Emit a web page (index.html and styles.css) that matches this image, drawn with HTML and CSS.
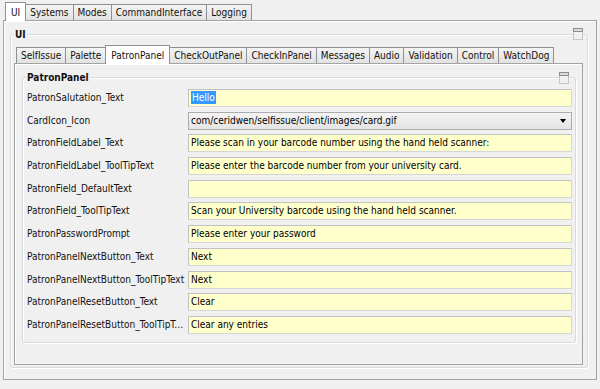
FILE: index.html
```html
<!DOCTYPE html>
<html lang="en">
<head>
    <meta charset="UTF-8">
    <title>SelfIssue Configuration</title>
    <link rel="stylesheet" href="styles.css">
</head>
<body>

    <div class="window">
        <!-- Haupt-Tabs -->
        <div class="tabs top-tabs">
            <div class="tab active">UI</div>
            <div class="tab">Systems</div>
            <div class="tab">Modes</div>
            <div class="tab">CommandInterface</div>
            <div class="tab">Logging</div>
        </div>

        <div class="tab-panel outer-panel">
            <div class="group ui-group">
                <div class="group-title">UI</div>
                <span class="dock-icon">
                    <svg width="10" height="12" viewBox="0 0 10 12">
                        <rect x="0.5" y="0.5" width="9" height="3" fill="#dcdcdc" stroke="#8c8c8c"/>
                        <path d="M0.5 3.5V11.5H9.5V3.5" fill="none" stroke="#9a9a9a" stroke-dasharray="1 1"/>
                    </svg>
                </span>

                <!-- Unter-Tabs -->
                <div class="tabs sub-tabs">
                    <div class="tab">SelfIssue</div>
                    <div class="tab">Palette</div>
                    <div class="tab active">PatronPanel</div>
                    <div class="tab">CheckOutPanel</div>
                    <div class="tab">CheckInPanel</div>
                    <div class="tab">Messages</div>
                    <div class="tab">Audio</div>
                    <div class="tab">Validation</div>
                    <div class="tab">Control</div>
                    <div class="tab">WatchDog</div>
                </div>

                <div class="tab-panel sub-panel">
                    <div class="group patron-group">
                        <div class="group-title">PatronPanel</div>
                        <span class="dock-icon">
                            <svg width="10" height="12" viewBox="0 0 10 12">
                                <rect x="0.5" y="0.5" width="9" height="3" fill="#dcdcdc" stroke="#8c8c8c"/>
                                <path d="M0.5 3.5V11.5H9.5V3.5" fill="none" stroke="#9a9a9a" stroke-dasharray="1 1"/>
                            </svg>
                        </span>

                        <div class="form-grid">
                            <div class="label">PatronSalutation_Text</div>
                            <div class="field"><span class="selected">Hello</span></div>

                            <div class="label">CardIcon_Icon</div>
                            <div class="field combo">
                                <span>com/ceridwen/selfissue/client/images/card.gif</span>
                                <span class="arrow"></span>
                            </div>

                            <div class="label">PatronFieldLabel_Text</div>
                            <div class="field">Please scan in your barcode number using the hand held scanner:</div>

                            <div class="label">PatronFieldLabel_ToolTipText</div>
                            <div class="field">Please enter the barcode number from your university card.</div>

                            <div class="label">PatronField_DefaultText</div>
                            <div class="field"></div>

                            <div class="label">PatronField_ToolTipText</div>
                            <div class="field">Scan your University barcode using the hand held scanner.</div>

                            <div class="label">PatronPasswordPrompt</div>
                            <div class="field">Please enter your password</div>

                            <div class="label">PatronPanelNextButton_Text</div>
                            <div class="field">Next</div>

                            <div class="label">PatronPanelNextButton_ToolTipText</div>
                            <div class="field">Next</div>

                            <div class="label">PatronPanelResetButton_Text</div>
                            <div class="field">Clear</div>

                            <div class="label">PatronPanelResetButton_ToolTipText</div>
                            <div class="field">Clear any entries</div>
                        </div>
                    </div>
                </div>
            </div>
        </div>
    </div>

</body>
</html>
```

FILE: styles.css
```css
* {
    box-sizing: border-box;
}

body {
    margin: 0;
    background-color: #f0f0f0;
    color: #111;
    font-family: "DejaVu Sans", sans-serif;
    font-stretch: condensed;
    font-size: 10px;
}

.window {
    height: 100vh;
    display: flex;
    flex-direction: column;
    padding: 2px 3px 9px;
}

/* Tabs */
.tabs {
    display: flex;
    align-items: flex-end;
    position: relative;
    z-index: 1;
    margin-bottom: -1px;
    padding-left: 2px;
}

.tab {
    height: 16px;
    margin-bottom: 1px;
    margin-left: -1px;
    padding: 0 4px;
    line-height: 15px;
    white-space: nowrap;
    border: 1px solid #8e9096;
    border-bottom: none;
    background: linear-gradient(#f4f4f4, #e2e2e2);
}

.tab:first-child {
    margin-left: 0;
}

.tab.active {
    height: 19px;
    margin-bottom: 0;
    padding: 2px 5px 0;
    background: #fff;
    position: relative;
    z-index: 1;
}

.tab-panel {
    flex: 1;
    display: flex;
    flex-direction: column;
    border: 1px solid #a3a3a3;
    box-shadow: inset 1px 1px 0 #fff;
}

/* Gruppen */
.group {
    position: relative;
    border: 1px solid #d5dadd;
    border-radius: 3px;
    box-shadow: inset 1px 1px 0 #fff, 1px 1px 0 #fff;
}

.group-title {
    position: absolute;
    top: -7px;
    left: 3px;
    padding: 0 1px;
    line-height: 14px;
    font-weight: bold;
    color: #111;
    background-color: #f0f0f0;
}

.dock-icon {
    position: absolute;
    top: -7px;
    right: 4px;
    width: 10px;
    height: 12px;
    background-color: #f0f0f0;
}

.dock-icon svg {
    display: block;
}

.ui-group {
    flex: 1;
    display: flex;
    flex-direction: column;
    margin: 13px 8px 11px 6px;
    padding: 10px 4px 2px 3px;
}

.patron-group {
    margin: 13px 6px 0 7px;
}

.patron-group .dock-icon {
    top: -6px;
    right: 6px;
}

/* Formular */
.form-grid {
    display: grid;
    grid-template-columns: 161px 1fr;
    grid-auto-rows: 18px;
    row-gap: 4.7px;
    padding: 11px 3px 8px 4px;
}

.label {
    line-height: 18px;
    padding-right: 2px;
    white-space: nowrap;
    overflow: hidden;
    text-overflow: ellipsis;
}

.field {
    padding-left: 2px;
    line-height: 16px;
    color: #000;
    white-space: nowrap;
    overflow: hidden;
    background-color: #ffffcc;
    border: 1px solid #c2c2c2;
    border-right-color: #d6d6d6;
    border-bottom-color: #d6d6d6;
}

.field .selected {
    display: inline-block;
    line-height: 13px;
    padding: 0 1px;
    color: #fff;
    background-color: #3399ff;
}

.combo {
    display: flex;
    justify-content: space-between;
    align-items: center;
    padding-right: 5px;
    background: linear-gradient(#f4f4f4, #e4e4e4);
    border-color: #acacac;
}

.arrow {
    width: 0;
    height: 0;
    border-left: 3.5px solid transparent;
    border-right: 3.5px solid transparent;
    border-top: 4px solid #000;
}
```
